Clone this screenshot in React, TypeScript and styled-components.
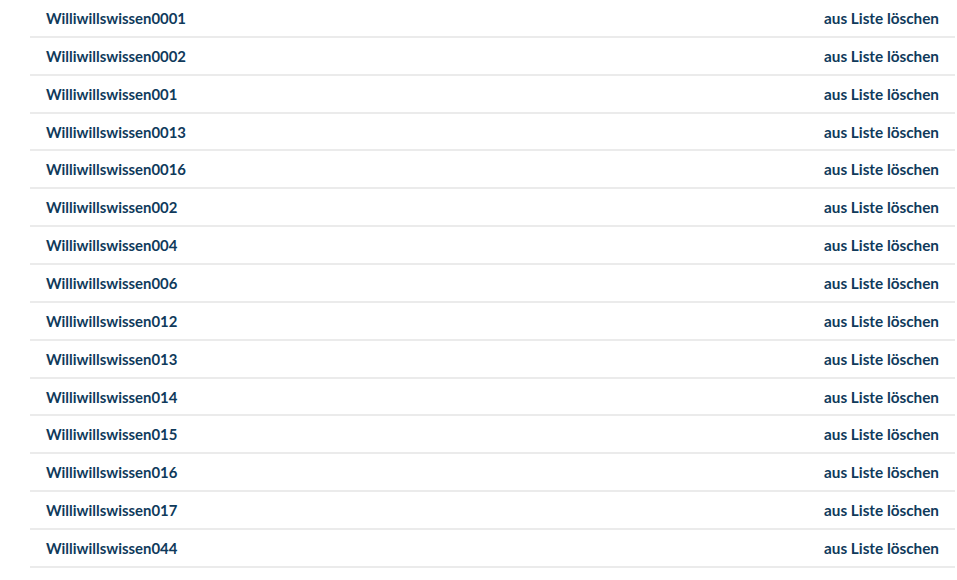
import React from "react";
import styled, { createGlobalStyle } from "styled-components";

const Global = createGlobalStyle`
  html, body { margin: 0; padding: 0; background: #ffffff; }
  body { font-family: Lato, "Noto Sans", sans-serif; }
`;

const Page = styled.div`
  padding: 0 2px 0 30px;
`;

const List = styled.ul`
  list-style: none;
  margin: 0;
  padding: 0;
`;

const Row = styled.li`
  display: flex;
  align-items: center;
  justify-content: space-between;
  height: 35.86px;
  padding: 0 16px;
  border-bottom: 2px solid #ebebeb;
`;

const Name = styled.a`
  font-size: 14.9px;
  font-weight: 700;
  color: #0f3a5b;
  text-decoration: none;
`;

const Remove = styled.button`
  border: 0;
  background: none;
  padding: 0;
  font-family: inherit;
  font-size: 15.3px;
  font-weight: 700;
  color: #0f3a5b;
  cursor: pointer;
`;

const names = [
  "Williwillswissen0001",
  "Williwillswissen0002",
  "Williwillswissen001",
  "Williwillswissen0013",
  "Williwillswissen0016",
  "Williwillswissen002",
  "Williwillswissen004",
  "Williwillswissen006",
  "Williwillswissen012",
  "Williwillswissen013",
  "Williwillswissen014",
  "Williwillswissen015",
  "Williwillswissen016",
  "Williwillswissen017",
  "Williwillswissen044",
];

export default function App() {
  return (
    <>
      <Global />
      <Page>
        <List>
          {names.map((n) => (
            <Row key={n}>
              <Name href="#">{n}</Name>
              <Remove>aus Liste löschen</Remove>
            </Row>
          ))}
        </List>
      </Page>
    </>
  );
}
